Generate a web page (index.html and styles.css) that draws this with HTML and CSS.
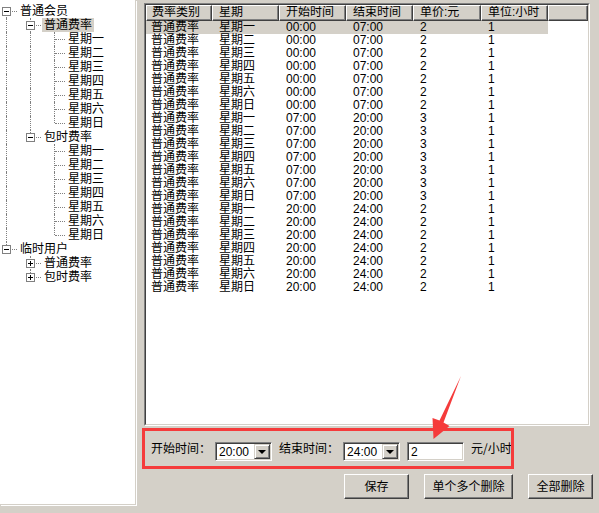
FILE: index.html
```html
<!DOCTYPE html>
<html lang="zh">
<head>
<meta charset="utf-8">
<title>费率设置</title>
<link rel="stylesheet" href="styles.css">
</head>
<body>
<div class="app">
  <div class="tree">
    <div class="row"><span class="c dn"><i class="box minus"></i></span><span class="t">普通会员</span></div>
    <div class="row sel"><span class="g on"></span><span class="c tb"><i class="box minus"></i></span><span class="t">普通费率</span></div>
    <div class="row"><span class="g on"></span><span class="g on"></span><span class="c tb"></span><span class="t">星期一</span></div>
    <div class="row"><span class="g on"></span><span class="g on"></span><span class="c tb"></span><span class="t">星期二</span></div>
    <div class="row"><span class="g on"></span><span class="g on"></span><span class="c tb"></span><span class="t">星期三</span></div>
    <div class="row"><span class="g on"></span><span class="g on"></span><span class="c tb"></span><span class="t">星期四</span></div>
    <div class="row"><span class="g on"></span><span class="g on"></span><span class="c tb"></span><span class="t">星期五</span></div>
    <div class="row"><span class="g on"></span><span class="g on"></span><span class="c tb"></span><span class="t">星期六</span></div>
    <div class="row"><span class="g on"></span><span class="g on"></span><span class="c up"></span><span class="t">星期日</span></div>
    <div class="row"><span class="g on"></span><span class="c up"><i class="box minus"></i></span><span class="t">包时费率</span></div>
    <div class="row"><span class="g on"></span><span class="g"></span><span class="c tb"></span><span class="t">星期一</span></div>
    <div class="row"><span class="g on"></span><span class="g"></span><span class="c tb"></span><span class="t">星期二</span></div>
    <div class="row"><span class="g on"></span><span class="g"></span><span class="c tb"></span><span class="t">星期三</span></div>
    <div class="row"><span class="g on"></span><span class="g"></span><span class="c tb"></span><span class="t">星期四</span></div>
    <div class="row"><span class="g on"></span><span class="g"></span><span class="c tb"></span><span class="t">星期五</span></div>
    <div class="row"><span class="g on"></span><span class="g"></span><span class="c tb"></span><span class="t">星期六</span></div>
    <div class="row"><span class="g on"></span><span class="g"></span><span class="c up"></span><span class="t">星期日</span></div>
    <div class="row"><span class="c up"><i class="box minus"></i></span><span class="t">临时用户</span></div>
    <div class="row"><span class="g"></span><span class="c tb"><i class="box plus"></i></span><span class="t">普通费率</span></div>
    <div class="row"><span class="g"></span><span class="c up"><i class="box plus"></i></span><span class="t">包时费率</span></div>
  </div>

  <div class="right">
    <div class="list">
      <div class="list-in">
        <div class="thead">
          <div class="th">费率类别</div>
          <div class="th">星期</div>
          <div class="th">开始时间</div>
          <div class="th">结束时间</div>
          <div class="th">单价:元</div>
          <div class="th">单位:小时</div>
          <div class="th"></div>
        </div>
        <div class="tbody">
          <div class="tr sel"><span>普通费率</span><span>星期一</span><span>00:00</span><span>07:00</span><span>2</span><span>1</span></div>
          <div class="tr"><span>普通费率</span><span>星期二</span><span>00:00</span><span>07:00</span><span>2</span><span>1</span></div>
          <div class="tr"><span>普通费率</span><span>星期三</span><span>00:00</span><span>07:00</span><span>2</span><span>1</span></div>
          <div class="tr"><span>普通费率</span><span>星期四</span><span>00:00</span><span>07:00</span><span>2</span><span>1</span></div>
          <div class="tr"><span>普通费率</span><span>星期五</span><span>00:00</span><span>07:00</span><span>2</span><span>1</span></div>
          <div class="tr"><span>普通费率</span><span>星期六</span><span>00:00</span><span>07:00</span><span>2</span><span>1</span></div>
          <div class="tr"><span>普通费率</span><span>星期日</span><span>00:00</span><span>07:00</span><span>2</span><span>1</span></div>
          <div class="tr"><span>普通费率</span><span>星期一</span><span>07:00</span><span>20:00</span><span>3</span><span>1</span></div>
          <div class="tr"><span>普通费率</span><span>星期二</span><span>07:00</span><span>20:00</span><span>3</span><span>1</span></div>
          <div class="tr"><span>普通费率</span><span>星期三</span><span>07:00</span><span>20:00</span><span>3</span><span>1</span></div>
          <div class="tr"><span>普通费率</span><span>星期四</span><span>07:00</span><span>20:00</span><span>3</span><span>1</span></div>
          <div class="tr"><span>普通费率</span><span>星期五</span><span>07:00</span><span>20:00</span><span>3</span><span>1</span></div>
          <div class="tr"><span>普通费率</span><span>星期六</span><span>07:00</span><span>20:00</span><span>3</span><span>1</span></div>
          <div class="tr"><span>普通费率</span><span>星期日</span><span>07:00</span><span>20:00</span><span>3</span><span>1</span></div>
          <div class="tr"><span>普通费率</span><span>星期一</span><span>20:00</span><span>24:00</span><span>2</span><span>1</span></div>
          <div class="tr"><span>普通费率</span><span>星期二</span><span>20:00</span><span>24:00</span><span>2</span><span>1</span></div>
          <div class="tr"><span>普通费率</span><span>星期三</span><span>20:00</span><span>24:00</span><span>2</span><span>1</span></div>
          <div class="tr"><span>普通费率</span><span>星期四</span><span>20:00</span><span>24:00</span><span>2</span><span>1</span></div>
          <div class="tr"><span>普通费率</span><span>星期五</span><span>20:00</span><span>24:00</span><span>2</span><span>1</span></div>
          <div class="tr"><span>普通费率</span><span>星期六</span><span>20:00</span><span>24:00</span><span>2</span><span>1</span></div>
          <div class="tr"><span>普通费率</span><span>星期日</span><span>20:00</span><span>24:00</span><span>2</span><span>1</span></div>
        </div>
      </div>
    </div>

    <div class="filter">
      <span class="lbl">开始时间：</span>
      <div class="combo"><span class="val">20:00</span><span class="drop"><i class="tri"></i></span></div>
      <span class="lbl gap">结束时间：</span>
      <div class="combo"><span class="val">24:00</span><span class="drop"><i class="tri"></i></span></div>
      <div class="field"><span class="val">2</span></div>
      <span class="lbl gap last">元/小时</span>
    </div>

    <div class="actions">
      <button class="btn w65">保存</button>
      <button class="btn w89">单个多个删除</button>
      <button class="btn w65">全部删除</button>
    </div>
  </div>
</div>

<svg class="arrow" width="599" height="513" viewBox="0 0 599 513">
  <polygon points="461,376 443.5,422.5 449.5,426 433.5,439 432.5,418 439.5,420.5" fill="#f53b3b"/>
</svg>
</body>
</html>
```

FILE: styles.css
```css
html, body {
  margin: 0;
  padding: 0;
}
body {
  width: 599px;
  height: 513px;
  overflow: hidden;
  background: #d4d0c8;
  font-family: "Liberation Sans", "Noto Sans CJK SC", sans-serif;
  font-size: 12px;
  color: #000;
  position: relative;
}
.app {
  display: flex;
  height: 513px;
}

/* tree */
.tree {
  flex: none;
  width: 135px;
  height: 500px;
  padding-top: 4px;
  background: #fff;
  border-right: 1px solid #d4d0c8;
  border-bottom: 1px solid #d4d0c8;
  box-shadow: 1px 1px 0 #fff;
}
.row {
  display: flex;
  height: 14px;
  line-height: 14px;
  white-space: nowrap;
}
.g, .c {
  flex: none;
  position: relative;
  height: 14px;
}
.g { width: 24px; }
.c { width: 18px; }
.g.on::before,
.c::before {
  content: "";
  position: absolute;
  left: 6px;
  border-left: 1px dotted #808080;
}
.g.on::before { top: 0; bottom: 0; }
.c.tb::before { top: 0; bottom: 0; }
.c.up::before { top: 0; height: 7px; }
.c.dn::before { top: 7px; bottom: 0; }
.c::after {
  content: "";
  position: absolute;
  left: 7px;
  width: 10px;
  top: 7px;
  border-top: 1px dotted #808080;
}
.box {
  position: absolute;
  left: 2px;
  top: 3px;
  width: 7px;
  height: 7px;
  border: 1px solid #808080;
  background: #fff;
  z-index: 1;
}
.box::before {
  content: "";
  position: absolute;
  left: 1px;
  top: 3px;
  width: 5px;
  height: 1px;
  background: #000;
}
.box.plus::after {
  content: "";
  position: absolute;
  left: 3px;
  top: 1px;
  width: 1px;
  height: 5px;
  background: #000;
}
.t {
  padding: 0 2px;
}
.row.sel .t {
  background: #d4d0c8;
}

/* right side */
.right {
  flex: 1;
  padding-left: 6px;
  display: flex;
  flex-direction: column;
}
.list {
  margin: 3px 0 0 2px;
  width: 446px;
  height: 423px;
  box-sizing: border-box;
  border: 1px solid;
  border-color: #808080 #fff #fff #808080;
}
.list-in {
  height: 100%;
  box-sizing: border-box;
  border: 1px solid;
  border-color: #404040 #d4d0c8 #d4d0c8 #404040;
  background: #fff;
  overflow: hidden;
}
.thead {
  display: grid;
  grid-template-columns: 66px 67px 67px 67px 68px 67px 1fr;
  height: 16px;
}
.th {
  box-sizing: border-box;
  height: 16px;
  border: 1px solid;
  border-color: #fff #404040 #404040 #fff;
  box-shadow: inset -1px -1px 0 #808080;
  background: #d4d0c8;
  padding-left: 5px;
  line-height: 13px;
  white-space: nowrap;
  overflow: hidden;
}
.th + .th { padding-left: 6px; }
.tr {
  display: grid;
  grid-template-columns: 66px 67px 67px 67px 68px 67px;
  width: 402px;
  height: 13px;
  line-height: 13px;
  white-space: nowrap;
}
.tr span { padding-left: 7px; }
.tr span:first-child { padding-left: 5px; }
.tr.sel { background: #d4d0c8; }

/* filter box */
.filter {
  margin-top: 2px;
  width: 372px;
  height: 41px;
  box-sizing: border-box;
  border: 3px solid #f53b3b;
  padding: 11px 0 0 6px;
  display: flex;
  align-items: flex-start;
  overflow: hidden;
}
.filter > * {
  flex: none;
}
.lbl {
  font-family: "Noto Sans CJK SC", sans-serif;
  line-height: 12px;
  height: 12px;
  margin-right: 4px;
  white-space: nowrap;
}
.lbl.gap { margin-left: 7px; }
.lbl.last { margin-right: 0; }
.combo, .field {
  position: relative;
  width: 57px;
  height: 19px;
  box-sizing: border-box;
  border: 1px solid;
  border-color: #808080 #fff #fff #808080;
  box-shadow: inset 1px 1px 0 #404040, inset -1px -1px 0 #d4d0c8;
  background: #fff;
  display: flex;
  align-items: center;
  padding: 0 2px 0 3px;
}
.field { margin-left: 7px; }
.val {
  flex: 1;
  line-height: 15px;
  margin-top: 1px;
}
.drop {
  flex: none;
  width: 16px;
  height: 15px;
  box-sizing: border-box;
  margin-right: -1px;
  border: 1px solid;
  border-color: #d4d0c8 #404040 #404040 #d4d0c8;
  box-shadow: inset 1px 1px 0 #fff, inset -1px -1px 0 #808080;
  background: #d4d0c8;
  display: flex;
  align-items: center;
  justify-content: center;
}
.tri {
  width: 0;
  height: 0;
  border-left: 4px solid transparent;
  border-right: 4px solid transparent;
  border-top: 4px solid #000;
  margin-top: 1px;
}

/* buttons */
.actions {
  margin-top: 5px;
  padding-right: 6px;
  display: flex;
  justify-content: flex-end;
  gap: 15px;
}
.btn {
  height: 25px;
  box-sizing: border-box;
  border: 1px solid;
  border-color: #fff #404040 #404040 #fff;
  box-shadow: inset -1px -1px 0 #808080;
  background: #d4d0c8;
  font: inherit;
  color: #000;
  padding: 0;
  line-height: 22px;
}
.w65 { width: 65px; }
.w89 { width: 89px; }

.arrow {
  position: absolute;
  left: 0;
  top: 0;
  pointer-events: none;
}
```
